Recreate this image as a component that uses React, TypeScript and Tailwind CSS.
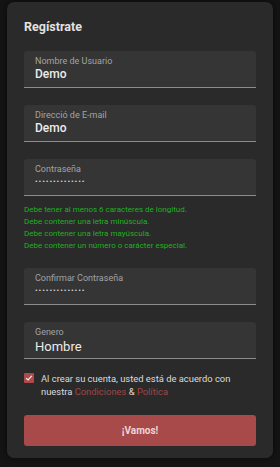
import React from 'react';

interface FieldProps {
  label: string;
  value: string;
  password?: boolean;
  big?: boolean;
}

function Field({ label, value, password = false, big = false }: FieldProps) {
  return (
    <div className="h-[37px] bg-[#353535] rounded-t-[3px] border-b border-[#8c8c8c] px-[11px] flex flex-col">
      <span className="mt-[5px] text-[9px] leading-[11px] text-[#a3a3a3]">{label}</span>
      {password ? (
        <span className="mt-[1px] text-[8px] leading-[12px] tracking-[0.9px] text-[#d8d8d8]">{value}</span>
      ) : (
        <span
          className={
            big
              ? 'mt-[1px] text-[13px] leading-[15px] text-[#ececec]'
              : 'mt-[0px] text-[12px] leading-[14px] font-medium text-[#ececec]'
          }
        >
          {value}
        </span>
      )}
    </div>
  );
}

const hints = [
  'Debe tener al menos 6 caracteres de longitud.',
  'Debe contener una letra minúscula.',
  'Debe contener una letra mayúscula.',
  'Debe contener un número o carácter especial.',
];

export default function App() {
  return (
    <div
      className="w-[280px] h-[467px] bg-[#141414] px-[7px] pt-[2px]"
      style={{ fontFamily: 'Roboto, "Noto Sans", sans-serif' }}
    >
      <div className="bg-[#2a2a2a] rounded-[7px] h-[456px] px-[17px] pt-[17px] shadow-[0_0_6px_rgba(0,0,0,0.6)]">
        <h1 className="text-[12.5px] leading-[15px] font-bold text-[#e2e2e2]">Regístrate</h1>

        <div className="mt-[17px] flex flex-col gap-[17px]">
          <Field label="Nombre de Usuario" value="Demo" />
          <Field label="Direcció de E-mail" value="Demo" />
          <div>
            <Field label="Contraseña" value="••••••••••••••" password />
            <div className="mt-[8px] flex flex-col text-[8px] leading-[12px] text-[#1fb21f]">
              {hints.map((h) => (
                <span key={h}>{h}</span>
              ))}
            </div>
          </div>
        </div>

        <div className="mt-[16px] flex flex-col gap-[17px]">
          <Field label="Confirmar Contraseña" value="••••••••••••••" password />
          <Field label="Genero" value="Hombre" big />
        </div>

        <div className="mt-[13px] flex gap-[7px]">
          <div className="mt-[1px] w-[10px] h-[10px] shrink-0 bg-[#b04a4a] rounded-[1px] flex items-center justify-center">
            <svg width="8" height="8" viewBox="0 0 8 8" fill="none">
              <path d="M1.2 4.2L3.1 6L6.8 1.8" stroke="#f2f2f2" strokeWidth="1.2" />
            </svg>
          </div>
          <p className="text-[9.4px] leading-[13px] text-[#dcdcdc]">
            Al crear su cuenta, usted está de acuerdo con nuestra{' '}
            <span className="text-[#9e4646]">Condiciones</span> &amp;{' '}
            <span className="text-[#9e4646]">Política</span>
          </p>
        </div>

        <button className="mt-[17px] w-full h-[31px] bg-[#a84a4a] rounded-[3px] text-[10px] font-bold text-[#ecd6d6]">
          ¡Vamos!
        </button>
      </div>
    </div>
  );
}
